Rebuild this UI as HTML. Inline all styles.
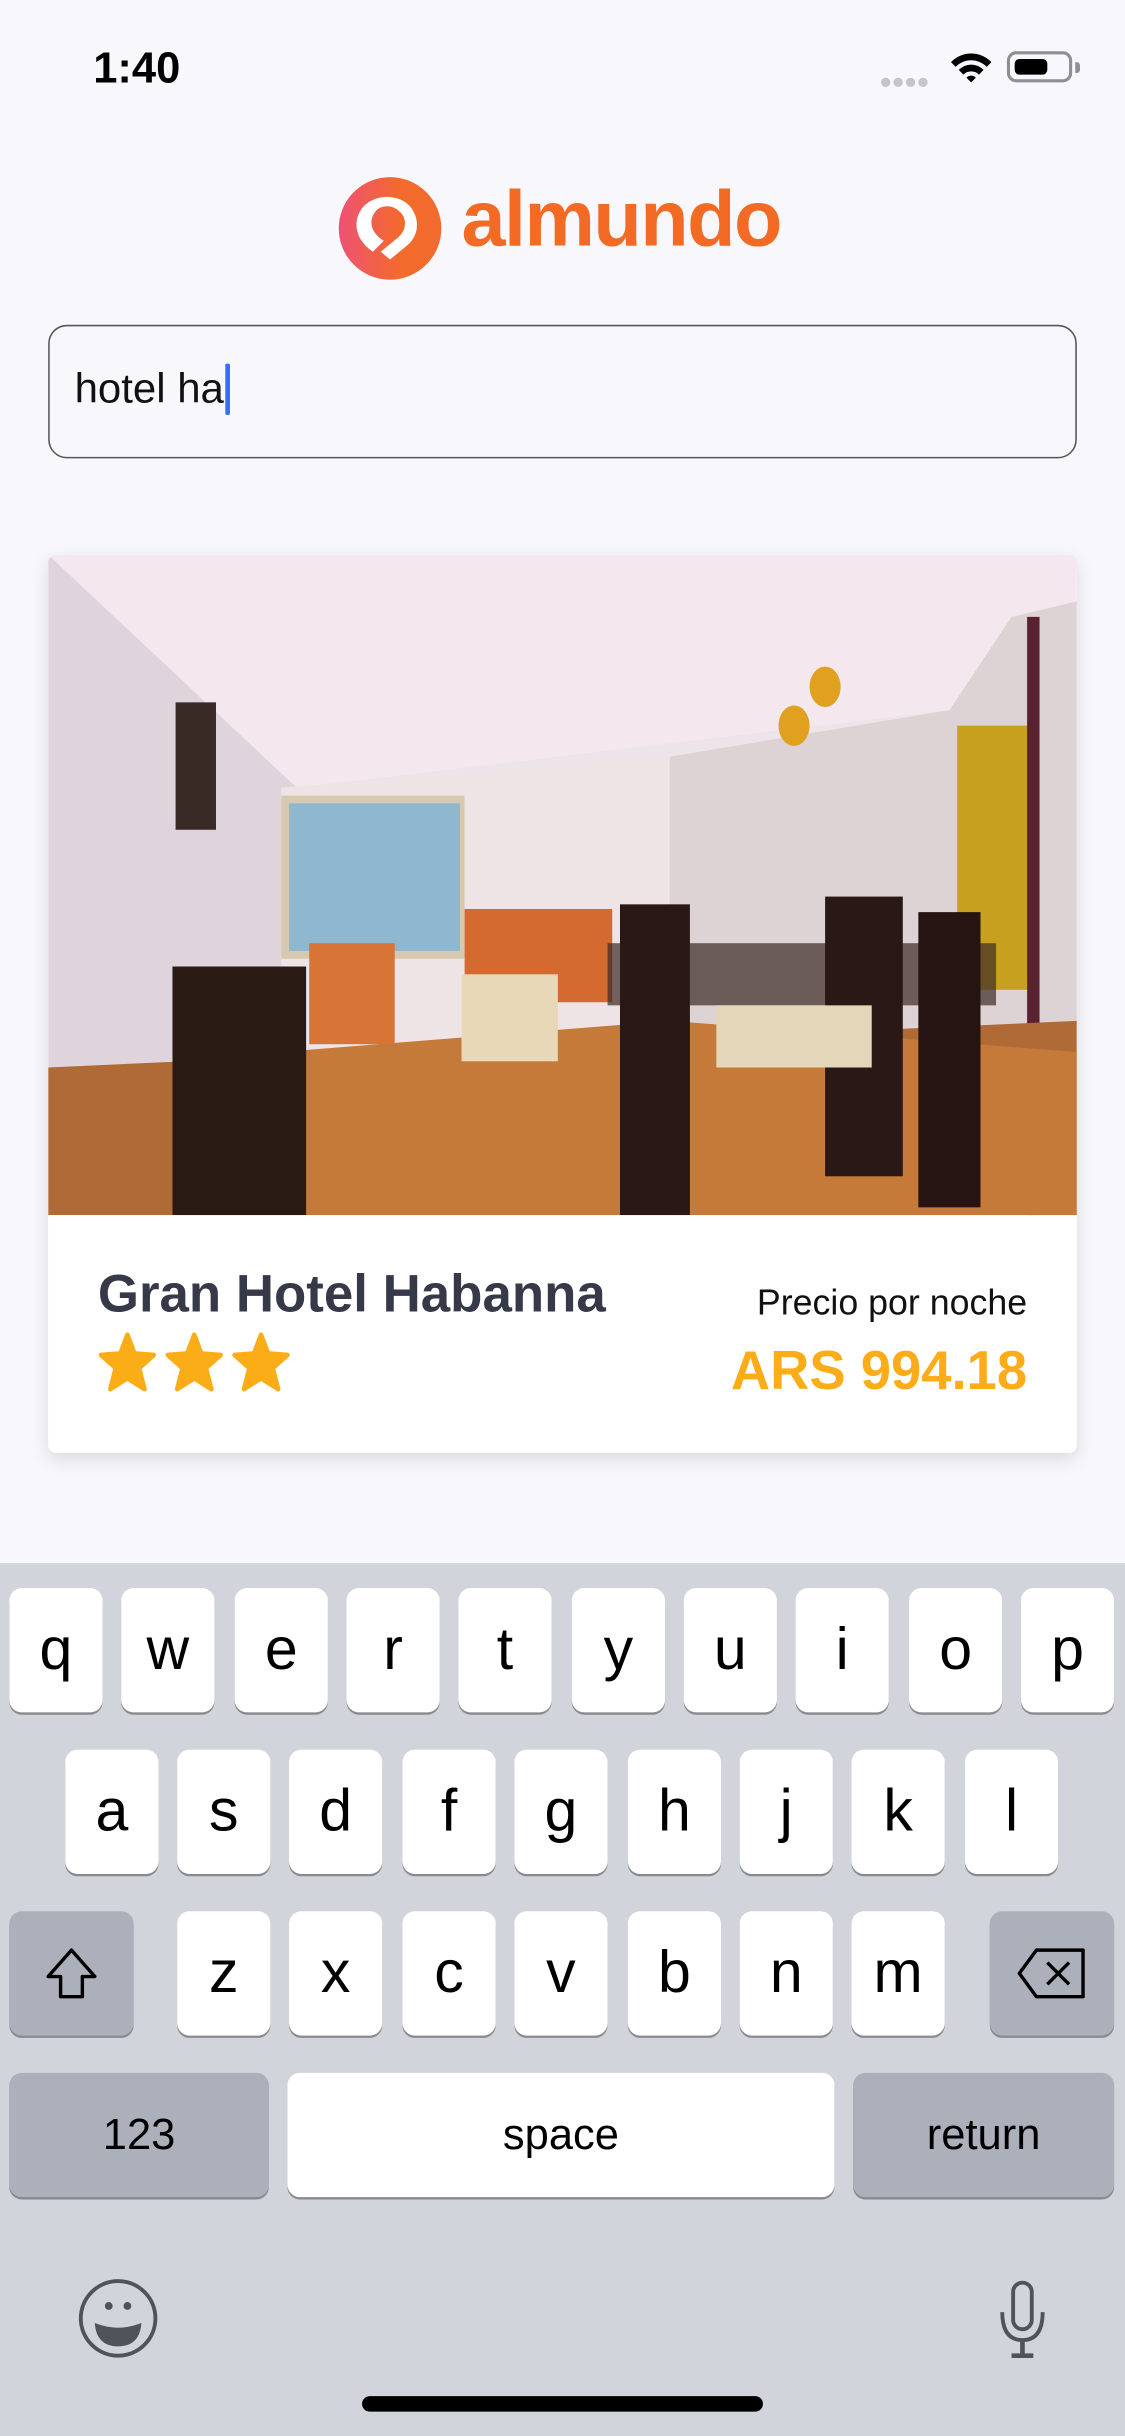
<!DOCTYPE html>
<html><head><meta charset="utf-8">
<style>
html,body{margin:0;padding:0;width:1125px;height:2436px;overflow:hidden;background:#f8f8fc;}
#w{position:absolute;left:0;top:0;width:724px;height:1568px;transform:scale(1.55387);transform-origin:0 0;font-family:"Liberation Sans",sans-serif;background:#f8f8fc;}
.a{position:absolute;}
.k{position:absolute;width:60px;height:80px;background:#fff;border-radius:8px;box-shadow:0 1.5px 0 #898a8e;text-align:center;font-size:38px;line-height:80px;color:#000;}
.g{background:#abb0bb;}
</style></head><body><div id="w">
<div class="a" style="left:60px;top:28px;font-size:28px;font-weight:bold;color:#000;">1:40</div>
<div class="a" style="left:567px;top:43px;">
 <span style="display:inline-block;width:6px;height:6px;border-radius:3px;background:#c5c5c9;margin-right:2px"></span><span style="display:inline-block;width:6px;height:6px;border-radius:3px;background:#c5c5c9;margin-right:2px"></span><span style="display:inline-block;width:6px;height:6px;border-radius:3px;background:#c5c5c9;margin-right:2px"></span><span style="display:inline-block;width:6px;height:6px;border-radius:3px;background:#c5c5c9"></span></div>
<svg class="a" style="left:610px;top:32px" width="30" height="22" viewBox="0 0 30 22"><path d="M2 8 A18 18 0 0 1 28 8 L25 11 A14 14 0 0 0 5 11Z M7 13 A11 11 0 0 1 23 13 L20 16 A7 7 0 0 0 10 16Z M12 18 A4 4 0 0 1 18 18 L15 21Z" fill="#000"/></svg>
<div class="a" style="left:648px;top:33px;width:42px;height:20px;border:2px solid #8e8e93;border-radius:6px;box-sizing:border-box;"><div style="position:absolute;left:3px;top:3px;width:21px;height:10px;background:#000;border-radius:3px"></div></div>
<div class="a" style="left:692px;top:40px;width:3px;height:7px;background:#8e8e93;border-radius:0 2px 2px 0"></div>

<svg class="a" style="left:216px;top:112px" width="70" height="70" viewBox="0 0 70 70"><defs><linearGradient id="lg" x1="0" x2="1"><stop offset="0" stop-color="#ee5275"/><stop offset="0.6" stop-color="#f26a2c"/></linearGradient></defs><circle cx="35" cy="35" r="33" fill="url(#lg)"/><path d="M24 50 C12 42 11 30 17 22 C24 13 40 12 48 21 C55 30 53 40 46 46 L35 55 L29 50 L40 41 C46 36 46 28 41 24 C36 19 28 20 25 25 C21 31 23 38 31 43 Z" fill="#fff"/></svg>
<div class="a" style="left:297px;top:111px;font-size:51px;font-weight:bold;color:#f26a23;letter-spacing:-1px;font-family:'Liberation Sans',sans-serif;">almundo</div>

<div class="a" style="left:31px;top:209px;width:662px;height:86px;border:1px solid #55565a;border-radius:12px;box-sizing:border-box;background:#f8f8fc"></div>
<div class="a" style="left:48px;top:235px;font-size:27px;color:#111;">hotel ha</div>
<div class="a" style="left:145px;top:234px;width:3px;height:33px;background:#3b6cf6;border-radius:1px"></div>

<div class="a" style="left:31px;top:357px;width:662px;height:578px;background:#fff;border-radius:5px;box-shadow:0 4px 12px rgba(0,0,0,0.12);overflow:hidden">
<svg width="662" height="425" viewBox="0 0 662 425">
<rect width="662" height="425" fill="#ece4e8"/>
<polygon points="0,0 662,0 662,30 580,100 160,150 0,40" fill="#f4e8ee"/>
<polygon points="0,0 160,150 150,425 0,425" fill="#e0d4dc"/>
<polygon points="150,150 400,130 400,300 150,320" fill="#eee4e6"/>
<rect x="150" y="155" width="118" height="105" fill="#d9c8b0"/>
<rect x="155" y="160" width="110" height="95" fill="#8eb8d0"/>
<polygon points="400,130 580,100 620,40 662,30 662,425 400,425" fill="#ddd2d4"/>
<rect x="585" y="110" width="50" height="170" fill="#c8a020"/>
<rect x="630" y="40" width="8" height="385" fill="#5a2230"/>
<polygon points="0,330 662,300 662,425 0,425" fill="#b06a35"/>
<polygon points="150,320 400,300 662,320 662,425 100,425" fill="#c57a3a"/>
<rect x="80" y="265" width="86" height="160" fill="#2a1a14"/>
<rect x="168" y="250" width="55" height="65" fill="#d87435"/>
<rect x="268" y="228" width="95" height="60" fill="#d46a30"/>
<rect x="266" y="270" width="62" height="56" fill="#e8d8b8"/>
<rect x="360" y="250" width="250" height="40" fill="#3a2a26" opacity="0.7"/>
<rect x="368" y="225" width="45" height="200" fill="#2a1816"/>
<rect x="500" y="220" width="50" height="180" fill="#2a1816"/>
<rect x="560" y="230" width="40" height="190" fill="#261412"/>
<rect x="430" y="290" width="100" height="40" fill="#e4d6b8"/>
<rect x="82" y="95" width="26" height="82" fill="#3a2a26"/>
<ellipse cx="480" cy="110" rx="10" ry="13" fill="#e0a020"/>
<ellipse cx="500" cy="85" rx="10" ry="13" fill="#e0a020"/>
</svg>
<div class="a" style="left:32px;top:457px;font-size:34px;font-weight:bold;color:#363a48;">Gran Hotel Habanna</div>
<svg class="a" style="left:32px;top:500px" width="126" height="40" viewBox="0 0 126 40"><g fill="#fbad18"><path id="s" d="M19 2 L23.5 14 L36 15 L26.5 23.5 L30 37 L19 30 L8 37 L11.5 23.5 L2 15 L14.5 14Z" stroke="#fbad18" stroke-width="3" stroke-linejoin="round"/><use href="#s" x="43"/><use href="#s" x="86"/></g></svg>
<div class="a" style="right:32px;top:468px;font-size:23px;color:#111;">Precio por noche</div>
<div class="a" style="right:32px;top:506px;font-size:35px;font-weight:bold;color:#fbac18;">ARS 994.18</div>
</div>

<div class="a" style="left:0;top:1006px;width:724px;height:562px;background:#d1d4da"></div>
<div class="k" style="left:6px;top:1022px">q</div><div class="k" style="left:78px;top:1022px">w</div><div class="k" style="left:151px;top:1022px">e</div><div class="k" style="left:223px;top:1022px">r</div><div class="k" style="left:295px;top:1022px">t</div><div class="k" style="left:368px;top:1022px">y</div><div class="k" style="left:440px;top:1022px">u</div><div class="k" style="left:512px;top:1022px">i</div><div class="k" style="left:585px;top:1022px">o</div><div class="k" style="left:657px;top:1022px">p</div>
<div class="k" style="left:42px;top:1126px">a</div><div class="k" style="left:114px;top:1126px">s</div><div class="k" style="left:186px;top:1126px">d</div><div class="k" style="left:259px;top:1126px">f</div><div class="k" style="left:331px;top:1126px">g</div><div class="k" style="left:404px;top:1126px">h</div><div class="k" style="left:476px;top:1126px">j</div><div class="k" style="left:548px;top:1126px">k</div><div class="k" style="left:621px;top:1126px">l</div>
<div class="k g" style="left:6px;top:1230px;width:80px"><svg width="40" height="40" viewBox="0 0 40 40" style="margin-top:20px"><path d="M20 5 L35 22 L27 22 L27 35 L13 35 L13 22 L5 22Z" fill="none" stroke="#000" stroke-width="2.2" stroke-linejoin="round"/></svg></div>
<div class="k" style="left:114px;top:1230px">z</div><div class="k" style="left:186px;top:1230px">x</div><div class="k" style="left:259px;top:1230px">c</div><div class="k" style="left:331px;top:1230px">v</div><div class="k" style="left:404px;top:1230px">b</div><div class="k" style="left:476px;top:1230px">n</div><div class="k" style="left:548px;top:1230px">m</div>
<div class="k g" style="left:637px;top:1230px;width:80px"><svg width="48" height="40" viewBox="0 0 48 40" style="margin-top:20px"><path d="M14 5 L44 5 L44 35 L14 35 L3 20Z" fill="none" stroke="#000" stroke-width="2.2" stroke-linejoin="round"/><path d="M21 13 L35 27 M35 13 L21 27" stroke="#000" stroke-width="2.2"/></svg></div>
<div class="k g" style="left:6px;top:1334px;width:167px;font-size:28px;">123</div>
<div class="k" style="left:185px;top:1334px;width:352px;font-size:28px;">space</div>
<div class="k g" style="left:549px;top:1334px;width:168px;font-size:28px;">return</div>
<svg class="a" style="left:50px;top:1466px" width="52" height="52" viewBox="0 0 52 52"><ellipse cx="26" cy="26" rx="24" ry="24" fill="none" stroke="#50535a" stroke-width="2.5"/><circle cx="20" cy="18" r="2.5" fill="#50535a"/><circle cx="32" cy="18" r="2.5" fill="#50535a"/><path d="M11 29 Q26 35 41 29 Q40 44 26 44 Q12 44 11 29Z" fill="#50535a"/></svg>
<svg class="a" style="left:640px;top:1466px" width="36" height="54" viewBox="0 0 36 54"><rect x="12" y="3" width="12" height="30" rx="6" fill="none" stroke="#50535a" stroke-width="2.5"/><path d="M5 22 Q5 40 18 40 Q31 40 31 22" fill="none" stroke="#50535a" stroke-width="2.5"/><path d="M18 40 V49 M11 50 H25" stroke="#50535a" stroke-width="3"/></svg>
<div class="a" style="left:233px;top:1542px;width:258px;height:10px;border-radius:5px;background:#000"></div>
</div></body></html>
